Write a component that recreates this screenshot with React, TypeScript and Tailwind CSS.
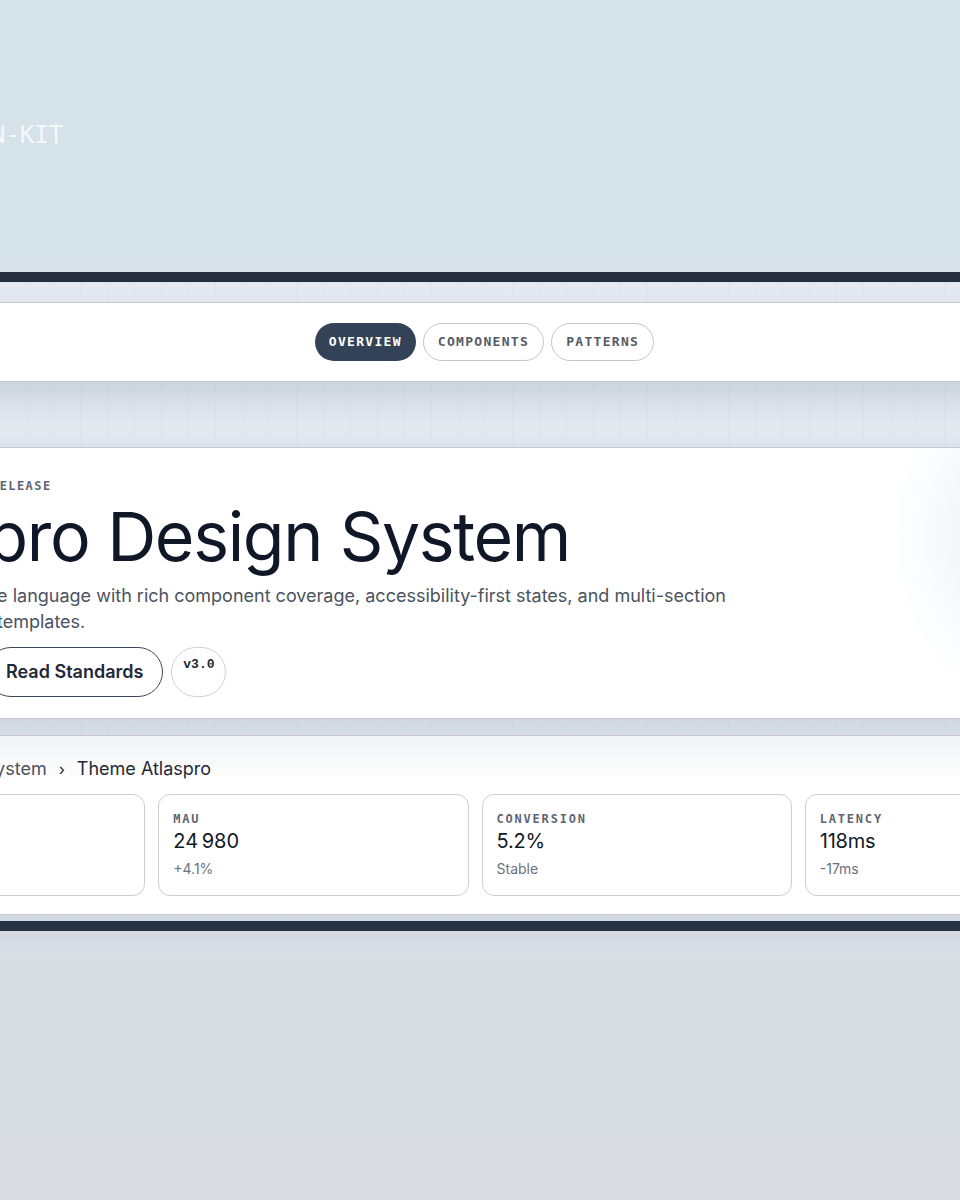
const sans = "font-['Inter','Liberation_Sans',sans-serif]";
const mono = "font-['DejaVu_Sans_Mono','Liberation_Mono',monospace]";

const tabs = [
  { label: "OVERVIEW", active: true },
  { label: "COMPONENTS", active: false },
  { label: "PATTERNS", active: false },
];

const stats = [
  { label: "USERS", value: "1.2M", note: "+12%" },
  { label: "MAU", value: "24\u202F980", note: "+4.1%" },
  { label: "CONVERSION", value: "5.2%", note: "Stable" },
  { label: "LATENCY", value: "118ms", note: "-17ms" },
];

const StatCard = ({ label, value, note }: { label: string; value: string; note: string }) => (
  <div className="h-[102px] rounded-xl border-[1.5px] border-[#cbced3] bg-white px-[14px] pt-[16px]">
    <div className={`${mono} text-[12px] leading-[16px] font-bold tracking-[0.15em] text-[#5f6673]`}>
      {label}
    </div>
    <div className="text-[20px] leading-[28px] text-[#111827] tracking-[-0.01em]">{value}</div>
    <div className="mt-[4px] text-[14px] leading-[20px] text-[#6b7280]">{note}</div>
  </div>
);

export default function App() {
  return (
    <div
      className={`${sans} min-h-[1200px] w-full overflow-hidden bg-[linear-gradient(180deg,#d5e3ea_0%,#d7e0e6_50%,#d8dce2_100%)]`}
    >
      <div className="ml-[-190px] w-[1330px]">
        {/* header */}
        <div className="h-[272px] pl-[22px] pt-[119px]">
          <div className={`${mono} text-[24px] leading-[32px] text-[#f5f8fa]`}>ATLAS DESIGN-KIT</div>
        </div>

        {/* frame */}
        <div className="border-y-[10px] border-[#252f40] bg-[linear-gradient(rgba(148,163,184,0.07)_1px,transparent_1px),linear-gradient(90deg,rgba(148,163,184,0.07)_1px,transparent_1px),linear-gradient(180deg,#e3eaf0_0%,#dfe5eb_100%)] bg-[size:27px_27px,27px_27px,100%_100%] pt-[20px] pb-[6px]">
          {/* nav */}
          <div className="flex h-[80px] items-center justify-center border-y border-[#c4c8cd] bg-white pl-[19px] shadow-[0_16px_30px_rgba(100,116,139,0.2)]">
            <div className="flex gap-[7px]">
              {tabs.map((t) => (
                <div
                  key={t.label}
                  className={`${mono} flex h-[38px] items-center rounded-full px-[14px] text-[13px] font-bold tracking-[0.1em] ${
                    t.active
                      ? "bg-[#334257] text-white"
                      : "border border-[#c3c6cb] text-[#555c68]"
                  }`}
                >
                  {t.label}
                </div>
              ))}
            </div>
          </div>

          {/* hero */}
          <div className="mt-[65px] h-[272px] border-y border-[#c6c9ce] bg-white bg-[radial-gradient(120px_170px_at_1200px_85px,#ebf1f6_0%,#ffffff_100%)] px-[25px] pt-[30px] shadow-[0_10px_24px_rgba(100,116,139,0.16)]">
            <div className={`${mono} text-[12px] leading-[16px] font-bold tracking-[0.12em] text-[#5f6673]`}>
              ATLASPRO · STABLE RELEASE
            </div>
            <h1 className="mt-[5px] text-[68px] leading-[1.1] font-normal tracking-[-0.02em] text-[#101828]">
              Atlaspro Design System
            </h1>
            <p className="mt-[9px] max-w-[900px] text-[18px] leading-[26px] text-[#4b5260]">
              A premium interface language with rich component coverage, accessibility-first states, and
              multi-section dashboard and list templates.
            </p>
            <div className="mt-[12px] flex items-start gap-[8px]">
              <div className="flex h-[50px] items-center rounded-full bg-[#334257] px-[22px] text-[18px] font-semibold text-white">
                Get Started
              </div>
              <div className="flex h-[50px] items-center rounded-full border-[1.5px] border-[#3a475a] px-[19px] text-[18px] font-semibold text-[#1f2937]">
                Read Standards
              </div>
              <div className="flex h-[50px] w-[55px] justify-center rounded-full border-[1.5px] border-[#cfd2d6] pt-[9px]">
                <span className="font-['Liberation_Mono',monospace] text-[13px] leading-[16px] font-bold text-[#1f2937]">
                  v3.0
                </span>
              </div>
            </div>
          </div>

          {/* stats */}
          <div className="mt-[16px] h-[180px] border-y border-[#c6c9ce] bg-[linear-gradient(180deg,#f1f2f4_0%,#ffffff_45px)] px-[25px] pt-[21px] shadow-[0_10px_24px_rgba(100,116,139,0.14)]">
            <div className="flex items-center gap-[12px] text-[18px] leading-[24px]">
              <span className="text-[#4b5260]">Studio</span>
              <span className="text-[#1f2937] text-[16px]">›</span>
              <span className="text-[#4b5260]">Design System</span>
              <span className="text-[#1f2937] text-[16px]">›</span>
              <span className="text-[#1f2937]">Theme Atlaspro</span>
            </div>
            <div className="mt-[13px] grid w-[1280px] grid-cols-4 gap-[13px]">
              {stats.map((s) => (
                <StatCard key={s.label} {...s} />
              ))}
            </div>
          </div>
        </div>
      </div>
    </div>
  );
}
